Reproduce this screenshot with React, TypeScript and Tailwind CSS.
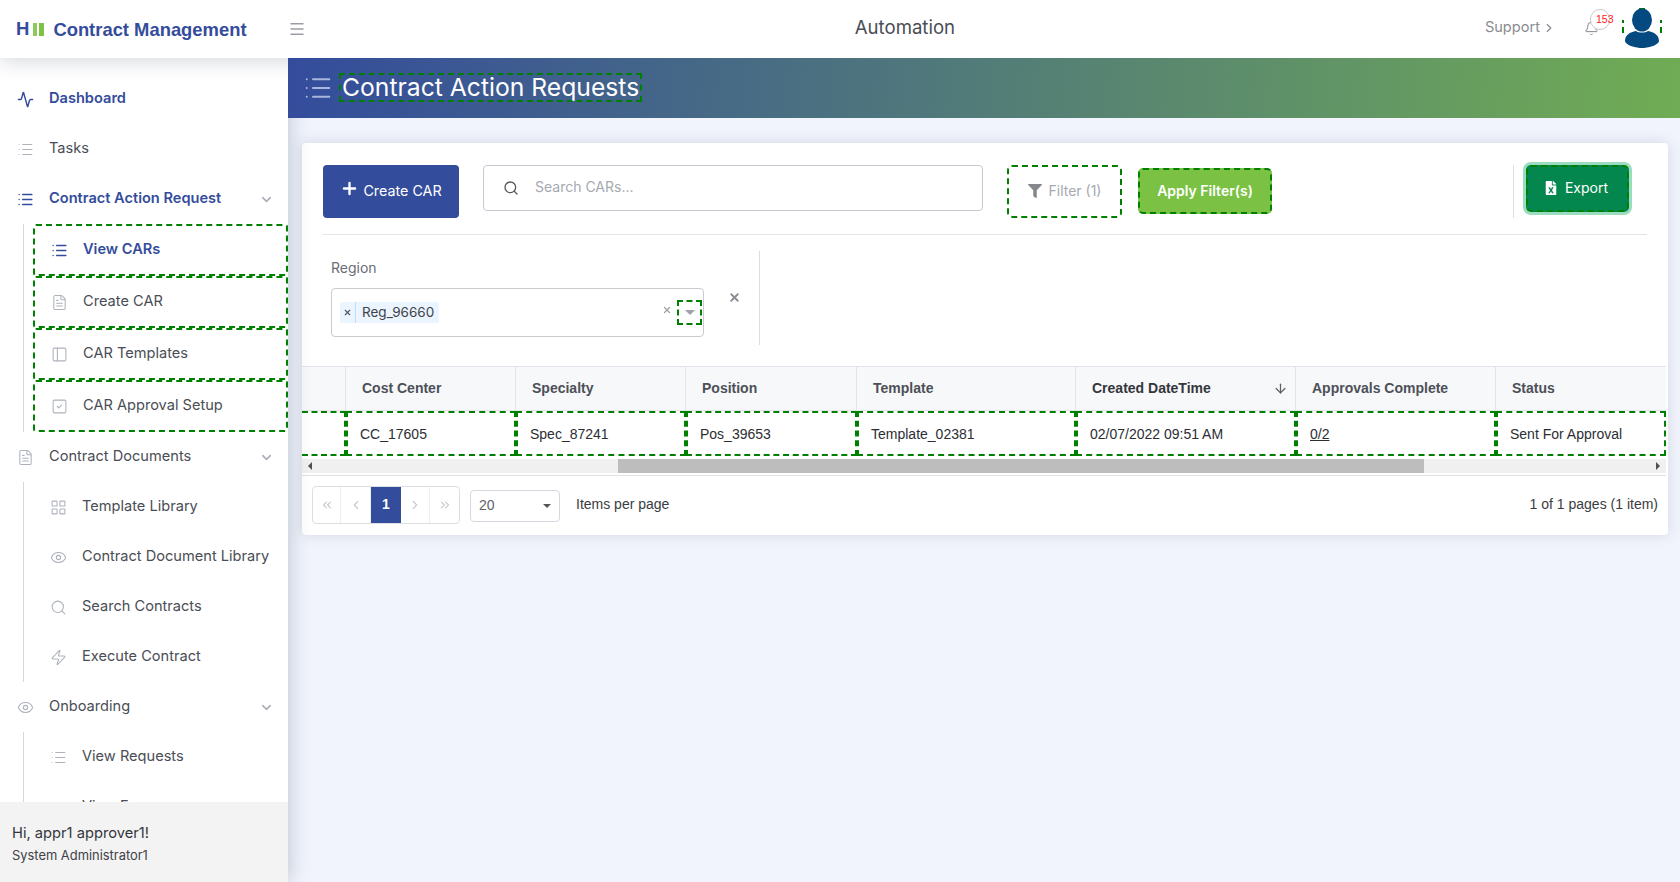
import {
  Activity,
  ArrowDown,
  Bell,
  ChevronDown,
  ChevronLeft,
  ChevronRight,
  ChevronsLeft,
  ChevronsRight,
  Eye,
  FileText,
  LayoutGrid,
  List,
  Menu,
  PanelLeft,
  Plus,
  Search,
  SquareCheck,
  X,
  Zap,
} from "lucide-react";
import type { ComponentType } from "react";
import { FaFileExcel, FaFilter } from "react-icons/fa";

type Icon = ComponentType<{ className?: string; strokeWidth?: number }>;

const TopItem = ({ icon: I, label, active, chevron }: { icon: Icon; label: string; active?: boolean; chevron?: boolean }) => (
  <div className="h-[50px] flex items-center pl-[17px] pr-[14px]">
    <I className={`w-[17px] h-[17px] shrink-0 ${active ? "text-[#344c9c]" : "text-[#aeb2bd]"}`} strokeWidth={active ? 2 : 1.5} />
    <span className={`ml-[15px] flex-1 text-[14.6px] ${active ? "font-semibold text-[#344c9c]" : "text-[#4a4d55]"}`}>{label}</span>
    {chevron && <ChevronDown className="w-[15px] h-[15px] text-[#a9adb6]" strokeWidth={2.5} />}
  </div>
);

const BoxedItem = ({ icon: I, label, active }: { icon: Icon; label: string; active?: boolean }) => (
  <div className="h-[52px] ml-[9px] flex items-center pl-[16px] border-2 border-dashed border-[#008000] rounded-[3px]">
    <I className={`w-[17px] h-[17px] shrink-0 ${active ? "text-[#344c9c]" : "text-[#aeb2bd]"}`} strokeWidth={active ? 2 : 1.5} />
    <span className={`ml-[15px] text-[14.6px] ${active ? "font-semibold text-[#344c9c]" : "text-[#4a4d55]"}`}>{label}</span>
  </div>
);

const SubItem = ({ icon: I, label }: { icon: Icon; label: string }) => (
  <div className="h-[50px] flex items-center pl-[26px]">
    <I className="w-[17px] h-[17px] shrink-0 text-[#aeb2bd]" strokeWidth={1.5} />
    <span className="ml-[15px] text-[14.6px] text-[#4a4d55]">{label}</span>
  </div>
);

const Sidebar = () => (
  <aside className="w-[288px] shrink-0 flex flex-col bg-white shadow-[0_0_20px_rgba(60,70,100,0.3)] z-10">
    <nav className="flex-1 min-h-0 overflow-hidden pt-[16px]">
      <TopItem icon={Activity} label="Dashboard" active />
      <TopItem icon={List} label="Tasks" />
      <TopItem icon={List} label="Contract Action Request" active chevron />
      <div className="ml-[23px] border-l border-[#d5d7dc]">
        <BoxedItem icon={List} label="View CARs" active />
        <BoxedItem icon={FileText} label="Create CAR" />
        <BoxedItem icon={PanelLeft} label="CAR Templates" />
        <BoxedItem icon={SquareCheck} label="CAR Approval Setup" />
      </div>
      <TopItem icon={FileText} label="Contract Documents" chevron />
      <div className="ml-[23px] border-l border-[#d5d7dc]">
        <SubItem icon={LayoutGrid} label="Template Library" />
        <SubItem icon={Eye} label="Contract Document Library" />
        <SubItem icon={Search} label="Search Contracts" />
        <SubItem icon={Zap} label="Execute Contract" />
      </div>
      <TopItem icon={Eye} label="Onboarding" chevron />
      <div className="ml-[23px] border-l border-[#d5d7dc]">
        <SubItem icon={List} label="View Requests" />
        <SubItem icon={Eye} label="View Forms" />
      </div>
    </nav>
    <div className="h-[80px] shrink-0 bg-[#f3f3f3] pl-[12px] pt-[21px]">
      <div className="text-[14.7px] leading-[20px] text-[#33363c]">Hi, appr1 approver1!</div>
      <div className="mt-[4px] text-[12.9px] leading-[18px] text-[#3f4248]">System Administrator1</div>
    </div>
  </aside>
);

// person glyph with the dashed focus outline showing only at the four edges
const Avatar = () => (
  <svg viewBox="0 0 44 44" className="w-[44px] h-[44px] shrink-0">
    <rect x="19" y="2" width="6" height="2" fill="#008000" />
    <rect x="19" y="40" width="6" height="2" fill="#008000" />
    <rect x="2" y="14" width="2" height="3" fill="#008000" />
    <rect x="2" y="21" width="2" height="6" fill="#008000" />
    <rect x="40" y="14" width="2" height="3" fill="#008000" />
    <rect x="40" y="21" width="2" height="6" fill="#008000" />
    <ellipse cx="22" cy="14" rx="10" ry="11.5" fill="#044a80" />
    <path d="M5 35c0-6 5-9 11-10 3 2 9 2 12 0 6 1 11 4 11 10 0 3-8 7-17 7S5 38 5 35z" fill="#044a80" />
  </svg>
);

const Header = () => (
  <header className="h-[58px] shrink-0 flex items-center bg-white relative z-20 shadow-[0_4px_20px_rgba(60,70,100,0.2)]">
    <div className="w-[288px] flex items-center pl-[16px] shrink-0 mt-[1px]">
      <span className="font-['Liberation_Sans',sans-serif] font-bold text-[18.5px] leading-none text-[#344c9c]">H</span>
      <span className="ml-[4px] w-[4px] h-[13px] shrink-0 bg-[#8ec95e]" />
      <span className="ml-[2px] w-[5px] h-[13px] shrink-0 bg-[#7dc242]" />
      <span className="ml-[9px] shrink-0 font-['Liberation_Sans',sans-serif] font-bold text-[18.4px] text-[#344c9c] whitespace-nowrap">Contract Management</span>
      <Menu className="ml-[41px] w-[18px] h-[18px] text-[#9a9da3] shrink-0" strokeWidth={2} />
    </div>
    <div className="flex-1 text-center text-[18.6px] text-[#4a4d55] pl-[37px] -mt-[3px]">Automation</div>
    <div className="flex items-center shrink-0 pr-[16px] -mt-[2px]">
      <span className="text-[14.6px] text-[#8a8c91]">Support</span>
      <ChevronRight className="ml-[2px] w-[14px] h-[14px] text-[#8a8c91]" strokeWidth={2} />
      <div className="relative ml-[28px] mr-[9px] w-[27px] h-[28px] -mt-[10px]">
        <Bell className="absolute left-0 top-[12px] w-[15px] h-[15px] text-[#7c7f85]" strokeWidth={1.5} />
        <span className="absolute left-[6px] top-0 w-[20px] h-[21px] pl-[5px] rounded-full border border-[#c9c9c9] bg-white font-['Liberation_Sans',sans-serif] text-[10.5px] leading-[19px] text-[#ff2020]">153</span>
      </div>
      <Avatar />
    </div>
  </header>
);

const columns = [
  { label: "", value: "", w: "w-[44px]" },
  { label: "Cost Center", value: "CC_17605", w: "w-[170px]" },
  { label: "Specialty", value: "Spec_87241", w: "w-[170px]" },
  { label: "Position", value: "Pos_39653", w: "w-[171px]" },
  { label: "Template", value: "Template_02381", w: "w-[219px]" },
  { label: "Created DateTime", value: "02/07/2022 09:51 AM", w: "w-[220px]", sort: true },
  { label: "Approvals Complete", value: "0/2", w: "w-[200px]", link: true },
  { label: "Status", value: "Sent For Approval", w: "w-[170px]" },
];

const DataTable = () => (
  <div className="font-['Liberation_Sans',sans-serif] mt-[21px] mr-[2px]">
    <div className="flex h-[45px] bg-[#f7f8fa] border-y border-[#e2e4ea]">
      {columns.map((c) => (
        <div key={c.label} className={`${c.w} shrink-0 flex items-center justify-between pl-[16px] pr-[7px] border-r last:border-r-0 border-[#e2e4ea] text-[14px] font-bold ${c.sort ? "text-[#33363c]" : "text-[#4d5058]"}`}>
          {c.label}
          {c.sort && <ArrowDown className="w-[15px] h-[15px] text-[#5b5e65]" strokeWidth={2} />}
        </div>
      ))}
    </div>
    <div className="flex h-[45px]">
      {columns.map((c) => (
        <div key={c.label} className={`${c.w} shrink-0 flex items-center pl-[12px] pt-[1px] border-y-2 border-x-2 border-dashed border-[#008000] text-[14px] text-[#2c2e33] first:border-l-0 ${c.link ? "underline" : ""}`}>
          {c.value}
        </div>
      ))}
    </div>
    <div className="mt-[3px] h-[14px] flex items-center bg-[#f0f0f0]">
      <span className="ml-[6px] w-0 h-0 border-y-[4px] border-y-transparent border-r-[4px] border-r-[#505050]" />
      <div className="ml-[306px] w-[806px] h-full bg-[#bdbdbd]" />
      <span className="ml-auto mr-[6px] w-0 h-0 border-y-[4px] border-y-transparent border-l-[4px] border-l-[#505050]" />
    </div>
    <div className="mt-[2px] border-t border-[#dfe1e6] h-[60px] flex items-center pl-[10px] pr-[8px] pb-[2px]">
      <div className="flex h-[38px] border border-[#dcdee3] rounded-[4px] overflow-hidden">
        <span className="w-[28px] flex items-center justify-center border-r border-[#eceef1]"><ChevronsLeft className="w-[14px] h-[14px] text-[#c8cad0]" strokeWidth={2} /></span>
        <span className="w-[30px] flex items-center justify-center border-r border-[#eceef1]"><ChevronLeft className="w-[14px] h-[14px] text-[#c8cad0]" strokeWidth={2} /></span>
        <span className="w-[30px] flex items-center justify-center bg-[#344c9c] text-white font-bold text-[14px]">1</span>
        <span className="w-[29px] flex items-center justify-center border-r border-[#eceef1]"><ChevronRight className="w-[14px] h-[14px] text-[#c8cad0]" strokeWidth={2} /></span>
        <span className="w-[29px] flex items-center justify-center"><ChevronsRight className="w-[14px] h-[14px] text-[#c8cad0]" strokeWidth={2} /></span>
      </div>
      <div className="ml-[10px] w-[90px] h-[32px] flex items-center justify-between pl-[8px] pr-[8px] border border-[#d5d8df] rounded-[4px] text-[14px] text-[#5f6269] mt-[2px]">
        20
        <span className="w-0 h-0 border-x-[4px] border-x-transparent border-t-[4px] border-t-[#555]" />
      </div>
      <span className="ml-[16px] text-[14px] text-[#3a3c42]">Items per page</span>
      <span className="ml-auto text-[14px] text-[#3a3c42]">1 of 1 pages (1 item)</span>
    </div>
  </div>
);

const Toolbar = () => (
  <div className="mx-[21px] mt-[22px] flex items-start h-[70px] border-b border-[#e3e4e8]">
    <button className="w-[136px] h-[53px] flex items-center justify-center pb-[1px] bg-[#344c9c] rounded-[4px] text-white text-[14.3px]">
      <Plus className="w-[19px] h-[19px] mr-[4px] -mt-[6px]" strokeWidth={3} />
      Create CAR
    </button>
    <div className="ml-[24px] w-[500px] h-[46px] flex items-center pl-[19px] border border-[#c6c9d1] rounded-[4px]">
      <Search className="w-[16px] h-[16px] text-[#55585f]" strokeWidth={2} />
      <span className="ml-[16px] -mt-[3px] text-[14px] text-[#a6a9b1]">Search CARs...</span>
    </div>
    <button className="ml-[24px] w-[115px] h-[53px] flex items-center justify-center pb-[2px] border-2 border-dashed border-[#008000] rounded-[5px] text-[14px] text-[#a6a9b1]">
      <FaFilter className="w-[14px] h-[14px] mr-[7px] text-[#85878d]" />
      Filter (1)
    </button>
    <button className="ml-[16px] mt-[3px] w-[134px] h-[46px] flex items-center justify-center pb-[2px] bg-[#7bc143] border-2 border-dashed border-[#008000] rounded-[5px] text-[14px] font-semibold text-white">
      Apply Filter(s)
    </button>
    <div className="ml-[241px] w-px h-[53px] bg-[#dedfe3]" />
    <button className="ml-[12px] w-[103px] h-[47px] flex items-center justify-center pb-[2px] pr-[2px] bg-[#03874f] border-2 border-dashed border-[#008000] rounded-[5px] text-[14px] text-white ring-3 ring-[#9bdcc0]">
      <FaFileExcel className="w-[12px] h-[14px] mr-[8px]" />
      Export
    </button>
  </div>
);

const RegionFilter = () => (
  <div className="flex h-[94px] mt-[16px] pl-[29px]">
    <div className="w-[373px]">
      <div className="text-[14px] leading-[20px] text-[#6a6d74] mt-[7px]">Region</div>
      <div className="mt-[10px] h-[49px] flex items-center pl-[8px] pr-[1px] border border-[#c9cbd1] rounded-[4px]">
        <span className="h-[21px] flex items-center bg-[#ebf5ff] rounded-[2px] text-[13.5px] text-[#3f4248]">
          <span className="w-[16px] h-full flex items-center justify-center border-r border-[#c4ddf7]"><X className="w-[9px] h-[9px] text-[#555]" strokeWidth={3} /></span>
          <span className="pl-[6px] pr-[5px]">Reg_96660</span>
        </span>
        <X className="ml-auto w-[10px] h-[10px] text-[#a0a2a8] -mt-[5px]" strokeWidth={3} />
        <span className="ml-[5px] w-[25px] h-[25px] flex items-center justify-center border-2 border-dashed border-[#008000]">
          <span className="w-0 h-0 border-x-[5px] border-x-transparent border-t-[5px] border-t-[#a0a2a8]" />
        </span>
      </div>
    </div>
    <X className="ml-[24px] mt-[40px] w-[13px] h-[13px] text-[#8c8e94]" strokeWidth={3.5} />
    <div className="ml-[18px] w-px h-full bg-[#dcdde1]" />
  </div>
);

const App = () => (
  <div className="h-screen flex flex-col overflow-hidden font-[Inter,sans-serif]">
    <Header />
    <div className="flex-1 min-h-0 flex">
      <Sidebar />
      <main className="flex-1 min-w-0 bg-[#f1f4fc]">
        <div className="relative z-30 h-[60px] flex items-center pl-[15px] bg-[linear-gradient(95deg,#344c9c,#70ac54)]">
          <List className="w-[30px] h-[30px] text-[#a9b6de]" strokeWidth={1.6} />
          <h1 className="ml-[6px] -mt-[1px] px-[1px] border-2 border-dashed border-[#008000] text-[24.7px] leading-[25px] text-white">Contract Action Requests</h1>
        </div>
        <section className="mt-[25px] ml-[14px] mr-[12px] h-[392px] bg-white rounded-[4px] shadow-[0_0_14px_rgba(60,70,100,0.16)] overflow-hidden">
          <Toolbar />
          <RegionFilter />
          <DataTable />
        </section>
      </main>
    </div>
  </div>
);

export default App;
